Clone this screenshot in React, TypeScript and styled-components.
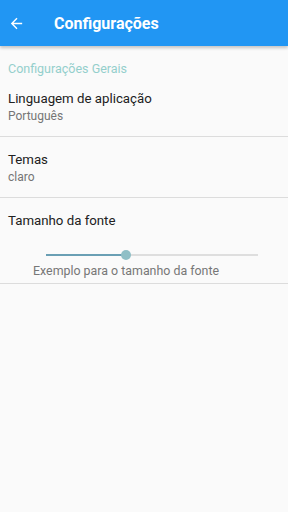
import React from 'react';
import styled, { createGlobalStyle } from 'styled-components';

const Global = createGlobalStyle`
	html, body {
		margin: 0;
		padding: 0;
		background: #fafafa;
		font-family: Roboto, 'Noto Sans', sans-serif;
	}
`;

const Screen = styled.div`
	width: 288px;
	height: 512px;
	background: #fafafa;
	display: flex;
	flex-direction: column;
`;

const Toolbar = styled.header`
	height: 46px;
	background: #2196f3;
	display: flex;
	align-items: center;
	box-shadow: 0 2px 3px rgba(0, 0, 0, 0.22);
	flex-shrink: 0;
`;

const BackButton = styled.button`
	width: 34px;
	height: 46px;
	padding: 0 0 0 8px;
	border: none;
	background: none;
	display: flex;
	align-items: center;
	cursor: pointer;
`;

const Title = styled.h1`
	margin: 0 0 0 20px;
	color: #fff;
	font-size: 16px;
	font-weight: 700;
`;

const SectionLabel = styled.div`
	color: #94cfcc;
	font-size: 12.5px;
	line-height: 14px;
	padding: 16px 8px 0;
	height: 14px;
`;

const Item = styled.div<{ $tall?: boolean }>`
	padding: 14px 8px 0;
	border-bottom: 1px solid #dcdcdc;
	height: ${({ $tall }) => ($tall ? '86px' : '61px')};
	box-sizing: border-box;
`;

const ItemTitle = styled.div`
	color: #212121;
	font-size: 13.25px;
	line-height: 18px;
`;

const ItemValue = styled.div`
	color: #757575;
	font-size: 12px;
	line-height: 15px;
	margin-top: 1px;
`;

const SliderRow = styled.div`
	margin: 20px 0 0 38px;
	width: 212px;
	height: 10px;
	position: relative;
`;

const Track = styled.div`
	position: absolute;
	left: 0;
	right: 0;
	top: 4px;
	height: 2px;
	background: #dedede;
`;

const Fill = styled.div`
	position: absolute;
	left: 0;
	top: 4px;
	height: 2px;
	background: #6a9fb4;
`;

const Thumb = styled.div`
	position: absolute;
	top: 0;
	width: 10px;
	height: 10px;
	margin-left: -5px;
	border-radius: 50%;
	background: #8fbfc6;
`;

const Example = styled.div`
	color: #777;
	font-size: 12.4px;
	line-height: 16px;
	margin: 3px 0 0 25px;
`;

export default function App() {
	const value = 0.375;
	return (
		<Screen>
			<Global />
			<Toolbar>
				<BackButton aria-label="Voltar">
					<svg width="17" height="17" viewBox="0 0 24 24">
						<path d="M20 11H7.83l5.59-5.59L12 4l-8 8 8 8 1.41-1.41L7.83 13H20v-2z" fill="#fff" />
					</svg>
				</BackButton>
				<Title>Configurações</Title>
			</Toolbar>
			<SectionLabel>Configurações Gerais</SectionLabel>
			<Item>
				<ItemTitle>Linguagem de aplicação</ItemTitle>
				<ItemValue>Português</ItemValue>
			</Item>
			<Item>
				<ItemTitle>Temas</ItemTitle>
				<ItemValue>claro</ItemValue>
			</Item>
			<Item $tall>
				<ItemTitle>Tamanho da fonte</ItemTitle>
				<SliderRow>
					<Track />
					<Fill style={{ width: `${value * 100}%` }} />
					<Thumb style={{ left: `${value * 100}%` }} />
				</SliderRow>
				<Example>Exemplo para o tamanho da fonte</Example>
			</Item>
		</Screen>
	);
}
